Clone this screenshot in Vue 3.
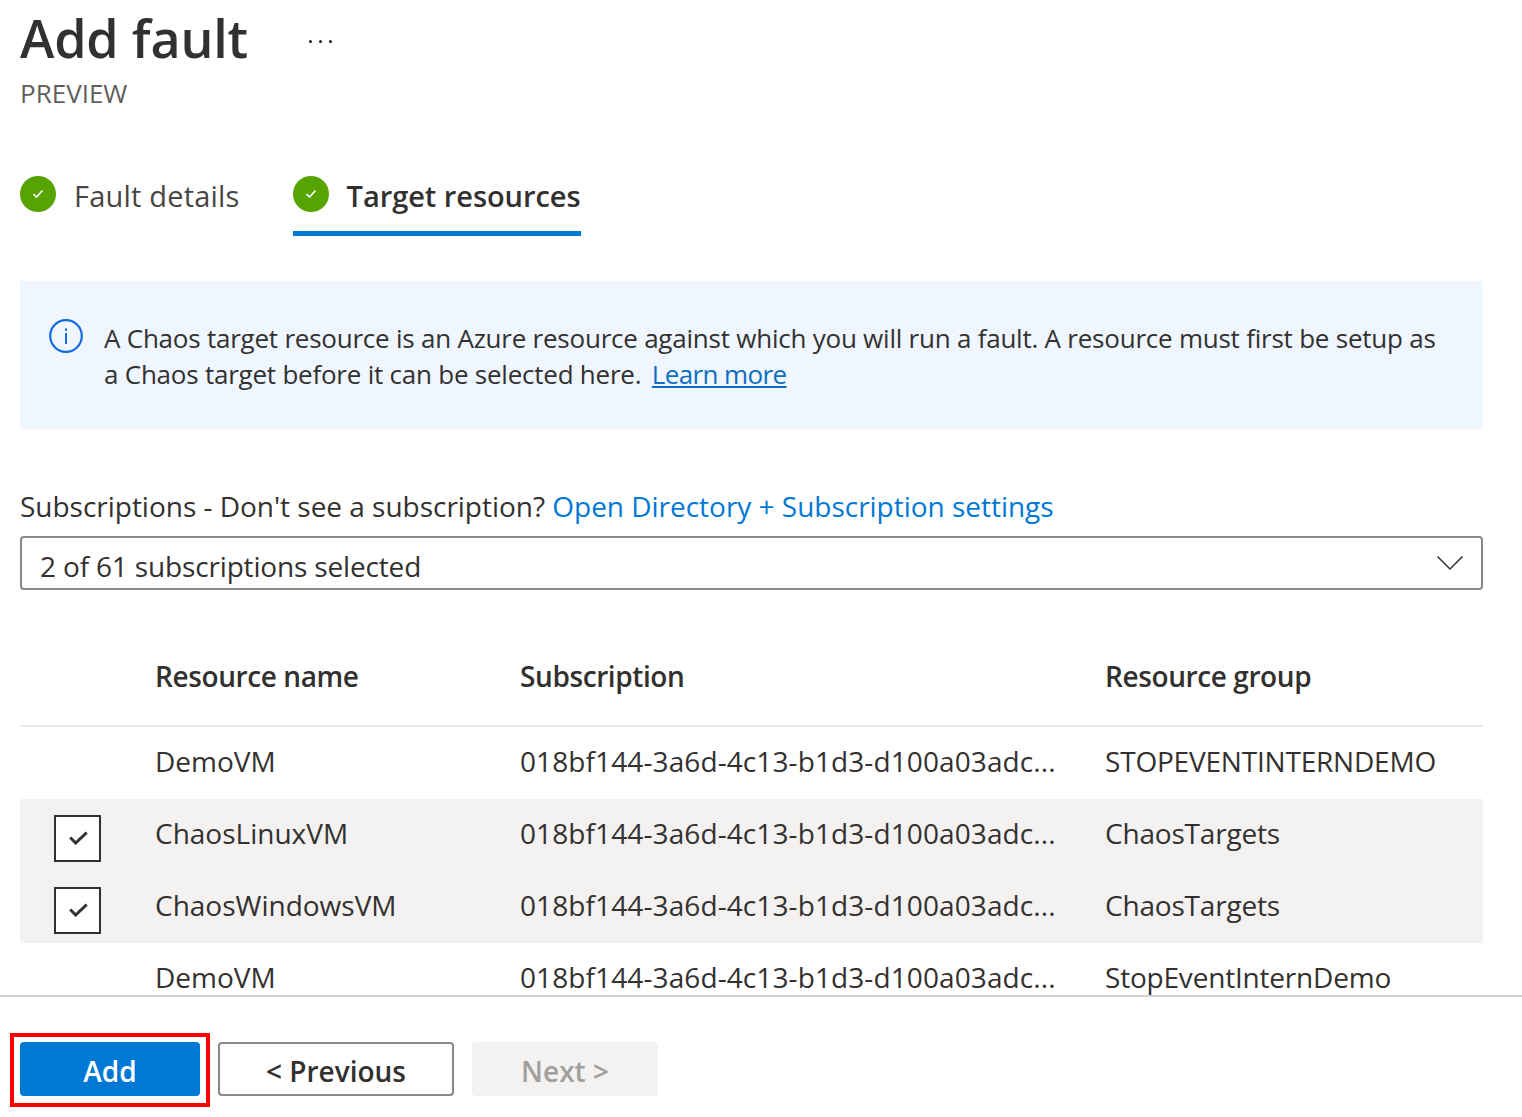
<script setup>
const rows = [
  { name: 'DemoVM', group: 'STOPEVENTINTERNDEMO', selected: false },
  { name: 'ChaosLinuxVM', group: 'ChaosTargets', selected: true },
  { name: 'ChaosWindowsVM', group: 'ChaosTargets', selected: true },
  { name: 'DemoVM', group: 'StopEventInternDemo', selected: false },
]
const subscriptionId = '018bf144-3a6d-4c13-b1d3-d100a03adc...'
const steps = [
  { label: 'Fault details', active: false },
  { label: 'Target resources', active: true },
]
</script>

<template>
  <div class="page">
    <div class="content">
      <header class="title-row">
        <h1>Add fault</h1>
        <span class="more">
          <i></i><i></i><i></i>
        </span>
      </header>
      <div class="preview">PREVIEW</div>

      <nav class="steps">
        <div v-for="step in steps" :key="step.label" class="step" :class="{ active: step.active }">
          <svg class="step-icon" width="36" height="36" viewBox="0 0 36 36">
            <circle cx="18" cy="18" r="18" fill="#57a300" />
            <path d="M13.500 18l3 3 6-6.500" fill="none" stroke="#fff" stroke-width="1.700" />
          </svg>
          <span class="step-label">{{ step.label }}</span>
        </div>
      </nav>

      <section class="banner">
        <svg class="info" width="34" height="34" viewBox="0 0 34 34">
          <circle cx="17" cy="17" r="15.800" fill="none" stroke="#0f6cdb" stroke-width="2.200" />
          <rect x="16" y="14" width="2" height="11" fill="#0f6cdb" />
          <rect x="16" y="9.500" width="2" height="2.400" fill="#0f6cdb" />
        </svg>
        <p>
          A Chaos target resource is an Azure resource against which you will run a fault. A resource must first be setup as
          a Chaos target before it can be selected here. <a href="#">Learn more</a>
        </p>
      </section>

      <div class="sub-label">
        Subscriptions - Don't see a subscription? <span class="link">Open Directory + Subscription settings</span>
      </div>
      <div class="dropdown">
        <span class="dropdown-text">2 of 61 subscriptions selected</span>
        <svg width="28" height="16" viewBox="0 0 28 16">
          <path d="M1.500 1.500l12.500 12.500 12.500-12.500" fill="none" stroke="#323130" stroke-width="1.500" />
        </svg>
      </div>

      <div class="table">
        <div class="row head">
          <div></div>
          <div>Resource name</div>
          <div>Subscription</div>
          <div>Resource group</div>
        </div>
        <div v-for="(row, i) in rows" :key="i" class="row" :class="{ selected: row.selected }">
          <div class="check-cell">
            <span v-if="row.selected" class="check">
              <svg width="19" height="14" viewBox="0 0 19 14">
                <path d="M1.200 6.500l5.500 5.500 11-10.500" fill="none" stroke="#323130" stroke-width="3" />
              </svg>
            </span>
          </div>
          <div class="name-cell">{{ row.name }}</div>
          <div class="sub-cell">{{ subscriptionId }}</div>
          <div>{{ row.group }}</div>
        </div>
      </div>
    </div>

    <footer class="footer">
      <div class="add-wrap">
        <button class="btn primary">Add</button>
        <span class="highlight"></span>
      </div>
      <button class="btn secondary">&lt; Previous</button>
      <button class="btn disabled">Next &gt;</button>
    </footer>
  </div>
</template>

<style scoped>
.page {
  width: 1522px;
  height: 1117px;
  display: flex;
  flex-direction: column;
  overflow: hidden;
  font-family: "Open Sans", "Noto Sans", sans-serif;
  color: #323130;
  background: #fff;
}
.content {
  height: 995px;
  flex: none;
  overflow: hidden;
  padding: 0 39px 0 20px;
  box-sizing: border-box;
}
.title-row {
  display: flex;
  align-items: flex-start;
  height: 78px;
}
h1 {
  margin: 0;
  font-size: 52px;
  font-weight: 600;
  line-height: 76px;
  letter-spacing: -0.2px;
}
.more {
  display: flex;
  gap: 7px;
  margin: 40px 0 0 61px;
}
.more i {
  width: 3px;
  height: 3px;
  border-radius: 50%;
  background: #201f1e;
}
.preview {
  font-size: 26px;
  line-height: 30px;
  color: #605e5c;
}
.steps {
  display: flex;
  gap: 53px;
  margin-top: 68px;
  height: 105px;
}
.step {
  display: flex;
  align-items: flex-start;
  gap: 18px;
  height: 55px;
  font-size: 29px;
  line-height: 36px;
  letter-spacing: 0.2px;
  color: #484644;
}
.step-label {
  padding-top: 2px;
}
.step.active {
  font-weight: 600;
  letter-spacing: -0.05px;
  color: #323130;
  border-bottom: 5px solid #0078d4;
}
.step-icon {
  flex: none;
}
.banner {
  display: flex;
  gap: 21px;
  height: 148px;
  padding: 38px 30px 0 29px;
  box-sizing: border-box;
  background: #eff6ff;
}
.info {
  flex: none;
}
.banner p {
  margin: 1px 0 0;
  font-size: 26px;
  line-height: 36px;
  letter-spacing: -0.23px;
}
.banner a {
  color: #106ebe;
  margin-left: 4px;
  letter-spacing: -0.62px;
}
.sub-label {
  margin-top: 58px;
  font-size: 28px;
  line-height: 38px;
  letter-spacing: -0.02px;
}
.link {
  color: #0078d4;
}
.dropdown {
  display: flex;
  align-items: center;
  justify-content: space-between;
  height: 54px;
  margin-top: 11px;
  padding: 0 17px 0 18px;
  box-sizing: border-box;
  border: 2px solid #8a8886;
  border-radius: 4px;
  font-size: 28px;
  letter-spacing: -0.16px;
}
.dropdown-text {
  padding-top: 6px;
}
.table {
  margin-top: 50px;
}
.row {
  display: grid;
  grid-template-columns: 135px 365px 585px 1fr;
  align-items: center;
  height: 72px;
  padding-bottom: 4px;
  box-sizing: border-box;
  font-size: 28px;
  letter-spacing: -0.2px;
}
.row.head {
  height: 87px;
  padding-bottom: 14px;
  font-weight: 600;
  letter-spacing: -0.4px;
  border-bottom: 2px solid #edebe9;
}
.row.selected {
  background: #f3f2f1;
}
.name-cell {
  letter-spacing: 0;
}
.sub-cell {
  letter-spacing: 0.1px;
}
.check-cell {
  padding-left: 34px;
}
.check {
  display: flex;
  align-items: center;
  justify-content: center;
  width: 47px;
  height: 47px;
  box-sizing: border-box;
  border: 2px solid #323130;
  background: #fff;
  margin-top: 10px;
  padding-left: 2px;
}
.footer {
  flex: 1;
  display: flex;
  gap: 18px;
  padding: 45px 0 0 20px;
  border-top: 2px solid #d2d0ce;
}
.add-wrap {
  position: relative;
  height: 54px;
}
.btn {
  height: 54px;
  box-sizing: border-box;
  border-radius: 4px;
  font-family: inherit;
  font-size: 28px;
  font-weight: 600;
  padding: 4px 0 0;
}
.primary {
  width: 180px;
  background: #0078d4;
  border: none;
  color: #fff;
}
.highlight {
  position: absolute;
  left: -10px;
  top: -9px;
  width: 200px;
  height: 74px;
  box-sizing: border-box;
  border: 4px solid #f00;
  pointer-events: none;
}
.secondary {
  width: 236px;
  background: #fff;
  border: 2px solid #8a8886;
  color: #323130;
}
.disabled {
  width: 186px;
  background: #f3f2f1;
  border: none;
  color: #a19f9d;
}
</style>
